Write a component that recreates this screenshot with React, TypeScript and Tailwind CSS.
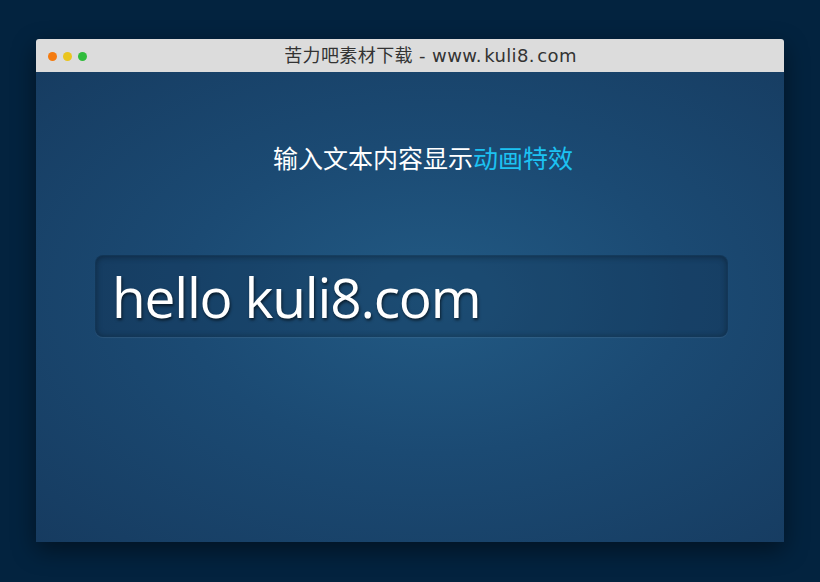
import React from "react";

export default function App() {
  return (
    <div className="w-[820px] h-[582px] bg-[#03233f] pt-[39px] pl-[36px] overflow-hidden">
      <div className="w-[748px] h-[503px] flex flex-col rounded-t-[3px] shadow-[0_8px_24px_rgba(0,0,0,0.45)]">
        <div className="h-[33px] bg-[#dcdcdc] rounded-t-[3px] flex items-center relative">
          <div className="flex items-center gap-[6px] pl-[12px] pt-[1px]">
            <span className="w-[9px] h-[9px] rounded-full bg-[#f47b10]" />
            <span className="w-[9px] h-[9px] rounded-full bg-[#eac51e]" />
            <span className="w-[9px] h-[9px] rounded-full bg-[#30bc3c]" />
          </div>
          <div className="absolute inset-0 flex items-center justify-center text-[18px] text-[#333] pl-[41px]" style={{ fontFamily: '"DejaVu Sans", "Noto Sans CJK SC", sans-serif', letterSpacing: "0.4px" }}>
            苦力吧素材下载 - www.&#8202;kuli8.&#8202;com
          </div>
        </div>
        <div className="flex-1 bg-[radial-gradient(ellipse_at_53%_48%,#225a84_0%,#1b4a73_45%,#163b60_100%)] flex flex-col items-center" style={{ fontFamily: '"Noto Sans", "Noto Sans CJK SC", sans-serif' }}>
          <div className="mt-[68px] text-[25px] leading-[34px] text-white pl-[26px]" style={{ fontFamily: '"Noto Sans CJK SC", sans-serif' }}>
            输入文本内容显示<span className="text-[#1cc2f2]">动画特效</span>
          </div>
          <div className="mt-[81px] w-[633px] h-[82px] ml-[3px] rounded-[8px] bg-[rgba(10,30,60,0.22)] border border-[rgba(0,0,0,0.12)] shadow-[inset_0_1px_6px_rgba(0,0,0,0.35),0_1px_1px_rgba(255,255,255,0.08)] flex items-center pl-[16px]">
            <span className="text-white text-[55px] leading-none mt-[1px] [text-shadow:1px_2px_3px_rgba(0,0,0,0.6)]" style={{ fontFamily: '"Open Sans", sans-serif', letterSpacing: "-1.2px" }}>
              hello kuli8.com
            </span>
          </div>
        </div>
      </div>
    </div>
  );
}
